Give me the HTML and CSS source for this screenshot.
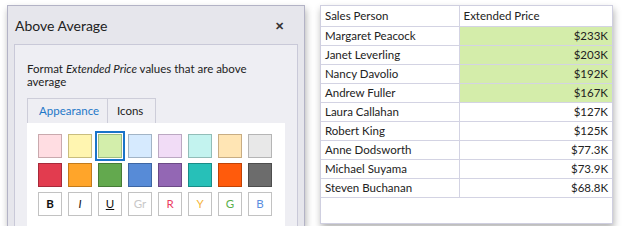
FILE: index.html
```html
<!DOCTYPE html>
<html lang="en">
<head>
    <meta charset="UTF-8">
    <title>Above Average</title>
    <link rel="stylesheet" href="styles.css">
</head>
<body>
    <div class="page">
        <!-- dialog -->
        <div class="dialog">
            <div class="dialog-head">
                <span class="dialog-title">Above Average</span>
                <span class="close">&#x2715;</span>
            </div>
            <div class="panel">
                <p class="desc">Format <i>Extended Price</i> values that are above<br>average</p>
                <div class="tabs">
                    <span class="tab active">Appearance</span>
                    <span class="tab">Icons</span>
                </div>
                <div class="tab-body">
                    <div class="swatches">
                        <span class="sw" style="background:#ffdde2;border-color:#c9a9ad"></span>
                        <span class="sw" style="background:#fff5b0;border-color:#c9bd7e"></span>
                        <span class="sw selected" style="background:#d3eeab;border-color:#9fbd82"></span>
                        <span class="sw" style="background:#d6eafe;border-color:#a2b4c6"></span>
                        <span class="sw" style="background:#f1dcf6;border-color:#bba8c2"></span>
                        <span class="sw" style="background:#c3f3ef;border-color:#92bdb8"></span>
                        <span class="sw" style="background:#ffe5b4;border-color:#c8ad83"></span>
                        <span class="sw" style="background:#e8e8e8;border-color:#b5b5b5"></span>

                        <span class="sw" style="background:#e23c4f;border-color:#a72a3a"></span>
                        <span class="sw" style="background:#ffa52a;border-color:#c27b1c"></span>
                        <span class="sw" style="background:#63a94e;border-color:#467b37"></span>
                        <span class="sw" style="background:#578bd7;border-color:#3d66a3"></span>
                        <span class="sw" style="background:#9367b4;border-color:#6b4a86"></span>
                        <span class="sw" style="background:#27c0b8;border-color:#1a8c87"></span>
                        <span class="sw" style="background:#ff5b0c;border-color:#c04306"></span>
                        <span class="sw" style="background:#6c6c6c;border-color:#4d4d4d"></span>

                        <span class="sw txt b">B</span>
                        <span class="sw txt it">I</span>
                        <span class="sw txt u">U</span>
                        <span class="sw txt" style="color:#c8c8c8">Gr</span>
                        <span class="sw txt" style="color:#ec3d62">R</span>
                        <span class="sw txt" style="color:#f5b53a">Y</span>
                        <span class="sw txt" style="color:#58b04a">G</span>
                        <span class="sw txt" style="color:#5a8ee0">B</span>
                    </div>
                </div>
            </div>
        </div>

        <!-- grid -->
        <div class="grid">
            <table>
                <tr><th>Sales Person</th><th>Extended Price</th></tr>
                <tr><td>Margaret Peacock</td><td class="num hi">$233K</td></tr>
                <tr><td>Janet Leverling</td><td class="num hi">$203K</td></tr>
                <tr><td>Nancy Davolio</td><td class="num hi">$192K</td></tr>
                <tr><td>Andrew Fuller</td><td class="num hi">$167K</td></tr>
                <tr><td>Laura Callahan</td><td class="num">$127K</td></tr>
                <tr><td>Robert King</td><td class="num">$125K</td></tr>
                <tr><td>Anne Dodsworth</td><td class="num">$77.3K</td></tr>
                <tr><td>Michael Suyama</td><td class="num">$73.9K</td></tr>
                <tr><td>Steven Buchanan</td><td class="num">$68.8K</td></tr>
            </table>
        </div>
    </div>
</body>
</html>
```

FILE: styles.css
```css
*{
    margin: 0;
    padding: 0;
    box-sizing: border-box;
}
body{
    background: #fff;
    font-family: Lato, "Noto Sans", sans-serif;
    font-size: 11px;
    color: #222;
}
.page{
    display: flex;
    align-items: flex-start;
    padding: 5px 0 0 7px;
    gap: 15px;
}

/* dialog */
.dialog{
    width: 298px;
    height: 221px;
    background: #e6e6ec;
    border: 1px solid #b3b3c6;
    border-bottom: none;
    overflow: hidden;
    box-shadow: 1px 4px 7px rgba(0,0,0,0.3);
}
.dialog-head{
    height: 38px;
    display: flex;
    align-items: center;
    justify-content: space-between;
    padding: 1px 20px 0 7px;
}
.dialog-title{
    font-size: 14px;
    color: #222;
}
.close{
    font-size: 10.5px;
    font-weight: bold;
    color: #333;
}
.panel{
    margin: 0 6px;
    height: 200px;
    background: #eeeef3;
    border: 1px solid #c9c9d8;
    padding: 17px 12px 0 12px;
}
.desc{
    line-height: 13px;
    font-size: 11.5px;
    color: #222;
}
.tabs{
    display: flex;
    margin-top: 10px;
}
.tab{
    height: 25px;
    line-height: 24px;
    padding: 0 11px;
    border: 1px solid #cdcdd9;
    border-bottom: none;
    font-size: 11.5px;
}
.tab + .tab{
    border-left: none;
    width: 48px;
    padding: 0 9px;
}
.tab.active{
    color: #1e78c8;
    width: 81px;
}
.tab-body{
    background: #fff;
    height: 120px;
    padding: 11px 0 0 11px;
}
.swatches{
    display: grid;
    grid-template-columns: repeat(8, 24px);
    grid-auto-rows: 24px;
    column-gap: 6px;
    row-gap: 5px;
}
.sw{
    display: block;
    border: 1px solid;
}
.sw.selected{
    box-shadow: 0 0 0 1px #fff, 0 0 0 3px #1a74c9;
}
.txt{
    border-color: #c2c2c2;
    background: #fff;
    text-align: center;
    line-height: 22px;
    font-size: 11.5px;
}
.b{ font-weight: bold; color: #111; }
.it{ font-style: italic; color: #111; }
.u{ text-decoration: underline; color: #111; }

/* grid */
.grid{
    width: 293px;
    height: 219px;
    background: #fff;
    border: 1px solid #cfcfe0;
    box-shadow: 1px 4px 7px rgba(0,0,0,0.3);
}
table{
    border-collapse: collapse;
    width: 100%;
    font-size: 11.5px;
}
th, td{
    height: 19px;
    border-bottom: 1px solid #d3d3e3;
    padding: 0 4px;
    font-weight: normal;
    text-align: left;
    white-space: nowrap;
}
th{
    height: 20px;
}
th:first-child, td:first-child{
    width: 138px;
    border-right: 1px solid #d3d3e3;
}
.num{
    text-align: right;
}
.hi{
    background: #d4edaa;
}
```
